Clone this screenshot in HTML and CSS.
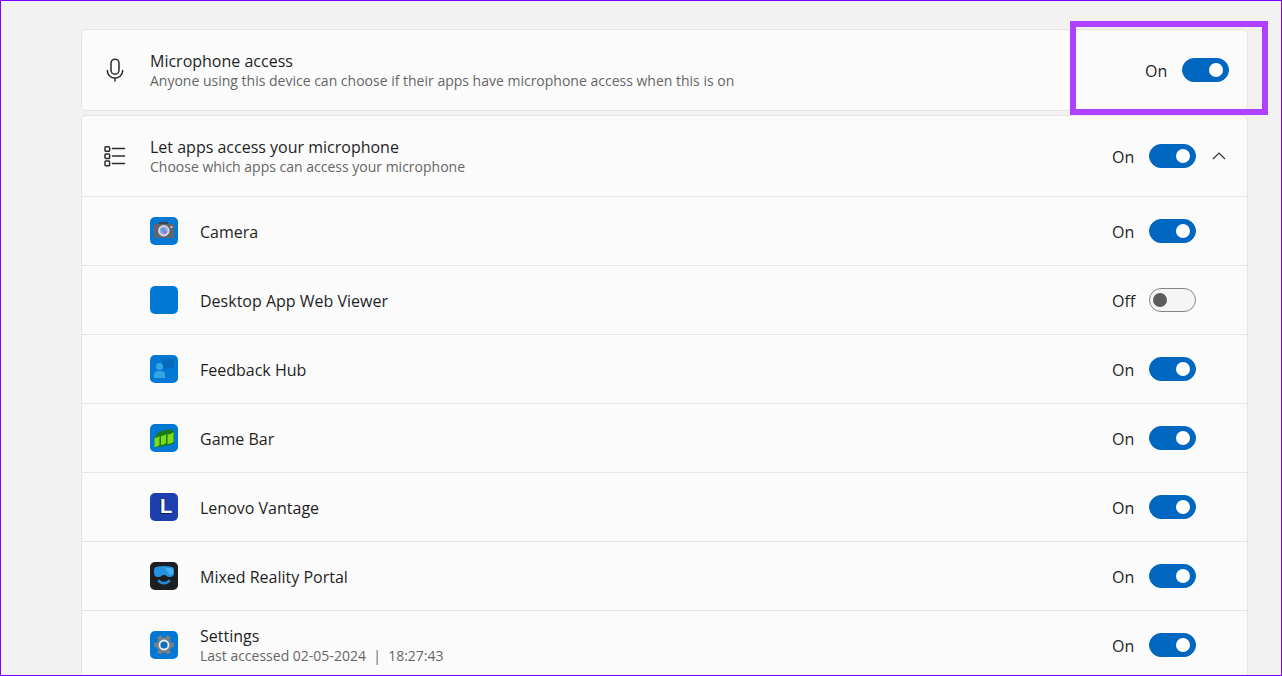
FILE: index.html
```html
<!DOCTYPE html>
<html lang="en">
<head>
    <meta charset="UTF-8">
    <meta name="viewport" content="width=device-width, initial-scale=1.0">
    <title>Microphone</title>
    <link rel="stylesheet" href="styles.css">
</head>
<body>
    <main class="page">
        <section class="card access">
            <div class="row head">
                <svg class="icon" viewBox="0 0 22 24" fill="none" stroke="#2b2b2b" stroke-width="1.5" stroke-linecap="round">
                    <rect x="7" y="1.200" width="8" height="15" rx="4"/>
                    <path d="M3.400 12.500v0.500a7.600 7 0 0 0 15.200 0V12.500M11 20v3"/>
                </svg>
                <div class="text">
                    <div class="title">Microphone access</div>
                    <div class="sub">Anyone using this device can choose if their apps have microphone access when this is on</div>
                </div>
                <label class="toggle"><span>On</span><input type="checkbox" aria-label="Microphone access" checked></label>
            </div>
            <div class="highlight"></div>
        </section>

        <section class="card">
            <div class="row head">
                <svg class="icon" viewBox="0 0 22 24" fill="none" stroke="#2b2b2b" stroke-width="1.5">
                    <rect x="1" y="2.700" width="4.600" height="4.600" rx="0.800"/>
                    <rect x="1" y="9.900" width="4.600" height="4.600" rx="0.800"/>
                    <rect x="1" y="17.100" width="4.600" height="4.600" rx="0.800"/>
                    <path d="M8.500 4.500h12M8.500 12h12M8.500 19.500h12" stroke-linecap="round"/>
                </svg>
                <div class="text">
                    <div class="title">Let apps access your microphone</div>
                    <div class="sub">Choose which apps can access your microphone</div>
                </div>
                <label class="toggle"><span>On</span><input type="checkbox" aria-label="Let apps access your microphone" checked></label>
                <button class="expand" type="button" aria-label="Collapse">
                    <svg viewBox="0 0 14 8" fill="none" stroke="#333" stroke-width="1.2"><path d="M1 7l6-6 6 6"/></svg>
                </button>
            </div>

            <div class="row app">
                <svg class="tile" viewBox="0 0 28 28">
                    <rect width="28" height="28" rx="5" fill="#0078d4"/>
                    <path d="M4 8q0-1 1-1h3l1.500-2h8L19 7h4q1 0 1 1v12q0 1-1 1H5q-1 0-1-1z" fill="#62666c"/>
                    <path d="M9.500 5h8l1 2h-10z" fill="#3f4247"/>
                    <rect x="20.500" y="9" width="2" height="2" fill="#c8ccd0"/>
                    <circle cx="13.800" cy="13.800" r="5.700" fill="#d9dde0"/>
                    <circle cx="13.800" cy="13.800" r="4" fill="#9aa2e0"/>
                    <circle cx="13" cy="13" r="1.800" fill="#2fa6e8"/>
                    <circle cx="15" cy="15" r="1.300" fill="#a45bc8"/>
                </svg>
                <div class="text"><div class="title">Camera</div></div>
                <label class="toggle"><span>On</span><input type="checkbox" aria-label="Camera" checked></label>
            </div>

            <div class="row app">
                <svg class="tile" viewBox="0 0 28 28"><rect width="28" height="28" rx="5" fill="#0078d4"/></svg>
                <div class="text"><div class="title">Desktop App Web Viewer</div></div>
                <label class="toggle"><span>Off</span><input type="checkbox" aria-label="Desktop App Web Viewer"></label>
            </div>

            <div class="row app">
                <svg class="tile" viewBox="0 0 28 28">
                    <rect width="28" height="28" rx="5" fill="#0078d4"/>
                    <path d="M12 4h12v9h-7l-2 3v-3h-3z" fill="#0868bc"/>
                    <circle cx="9.500" cy="11.500" r="3.500" fill="#35a5e5"/>
                    <path d="M4 23v-3q0-4 4-4h3q4 0 4 4v3z" fill="#35a5e5"/>
                </svg>
                <div class="text"><div class="title">Feedback Hub</div></div>
                <label class="toggle"><span>On</span><input type="checkbox" aria-label="Feedback Hub" checked></label>
            </div>

            <div class="row app">
                <svg class="tile" viewBox="0 0 28 28">
                    <rect width="28" height="28" rx="5" fill="#0078d4"/>
                    <path d="M5 13l3-4.500Q15 5 22 5.500l2 2v12l-3 1-14 3z" fill="#187a18"/>
                    <path d="M4.500 14q3 0 5-2v9q-2 2-5 2zM11 12q3 0 5-2v9q-2 2-5 2zM17.500 10.500q3 0 6-2.500v10q-2 2-6 2z" fill="#7edb12"/>
                </svg>
                <div class="text"><div class="title">Game Bar</div></div>
                <label class="toggle"><span>On</span><input type="checkbox" aria-label="Game Bar" checked></label>
            </div>

            <div class="row app">
                <svg class="tile" viewBox="0 0 28 28">
                    <rect width="28" height="28" rx="5" fill="#1e3fae"/>
                    <text class="letter shadow" x="9" y="21">L</text>
                    <text class="letter" x="10" y="20">L</text>
                </svg>
                <div class="text"><div class="title">Lenovo Vantage</div></div>
                <label class="toggle"><span>On</span><input type="checkbox" aria-label="Lenovo Vantage" checked></label>
            </div>

            <div class="row app">
                <svg class="tile" viewBox="0 0 28 28">
                    <rect width="28" height="28" rx="5" fill="#1c1f22"/>
                    <path d="M6 5q8-2 16 0 2 0.500 2 3v3q0 4-4 4-2.500 0-4-1.500-2-1.500-4 0Q10.500 15 8 15q-4 0-4-4V8q0-2.500 2-3z" fill="#2492e0"/>
                    <path d="M15 6h6q2 0 2 3v2q-1 2-3 2-3-3-5-7z" fill="#42b0f5"/>
                    <path d="M8 18.500q6 5.500 12 0" fill="none" stroke="#2b86cf" stroke-width="2.400"/>
                </svg>
                <div class="text"><div class="title">Mixed Reality Portal</div></div>
                <label class="toggle"><span>On</span><input type="checkbox" aria-label="Mixed Reality Portal" checked></label>
            </div>

            <div class="row app">
                <svg class="tile" viewBox="0 0 28 28">
                    <rect width="28" height="28" rx="5" fill="#0078d4"/>
                    <g stroke="#7b8085" stroke-width="4.500">
                        <path d="M4 14h20M9 5.300l10 17.400M19 5.300L9 22.700"/>
                    </g>
                    <circle cx="14" cy="14" r="7.500" fill="#7b8085"/>
                    <circle cx="14" cy="14" r="4.500" fill="#0f6fc0" stroke="#e8ecef" stroke-width="1.800"/>
                </svg>
                <div class="text">
                    <div class="title">Settings</div>
                    <div class="sub">Last accessed 02-05-2024 &nbsp;|&nbsp; 18:27:43</div>
                </div>
                <label class="toggle"><span>On</span><input type="checkbox" aria-label="Settings" checked></label>
            </div>
        </section>
    </main>
</body>
</html>
```
FILE: styles.css
```css
* {
    box-sizing: border-box;
}
body {
    margin: 0;
    font-family: "Open Sans", "Noto Sans", sans-serif;
    color: #1f1f1f;
}
.page {
    height: 100vh;
    overflow: hidden;
    padding: 28px 33px 0 80px;
    background: #f2f2f2;
    border: 1px solid #8000ff;
}
.card {
    margin-bottom: 4px;
    background: #fbfbfb;
    border: 1px solid #e5e5e5;
    border-radius: 5px;
}
.access {
    position: relative;
}
.row {
    display: flex;
    align-items: center;
    padding-right: 51px;
}
.head {
    height: 80px;
    padding-left: 22px;
    gap: 24px;
}
.access .head {
    padding-right: 18px;
}
.app {
    height: 69px;
    padding-left: 68px;
    gap: 22px;
    border-top: 1px solid #e5e5e5;
}
.icon {
    width: 22px;
    height: 24px;
}
.tile {
    width: 28px;
    height: 28px;
}
.letter {
    font: bold 20px "Liberation Sans", sans-serif;
    fill: #fff;
}
.shadow {
    fill: #10204f;
}
.text {
    flex: 1;
    padding-top: 2px;
}
.title {
    font-size: 16px;
    line-height: 20px;
}
.sub {
    font-size: 14px;
    line-height: 20px;
    color: #666;
}
.toggle {
    display: flex;
    align-items: center;
    font-size: 16px;
    line-height: 20px;
}
.toggle span {
    width: 37px;
    padding-top: 2px;
}
.toggle input {
    appearance: none;
    display: flex;
    align-items: center;
    width: 47px;
    height: 24px;
    margin: 0;
    padding: 0 3px;
    background: #f5f5f5;
    border: 1px solid #868686;
    border-radius: 12px;
}
.toggle input::before {
    content: "";
    width: 14px;
    height: 14px;
    border-radius: 50%;
    background: #5c5c5c;
}
.toggle input:checked {
    justify-content: flex-end;
    padding: 0 5px;
    background: #0067c0;
    border-color: #0067c0;
}
.toggle input:checked::before {
    background: #fff;
}
.expand {
    display: flex;
    width: 14px;
    margin: 0 -30px 0 -8px;
    padding: 0;
    background: none;
    border: none;
}
.expand svg {
    width: 14px;
    height: 8px;
}
/* frame around the main switch */
.highlight {
    position: absolute;
    top: -9px;
    right: -21px;
    bottom: -5px;
    width: 198px;
    border: 6px solid #b041ff;
    pointer-events: none;
}
```
